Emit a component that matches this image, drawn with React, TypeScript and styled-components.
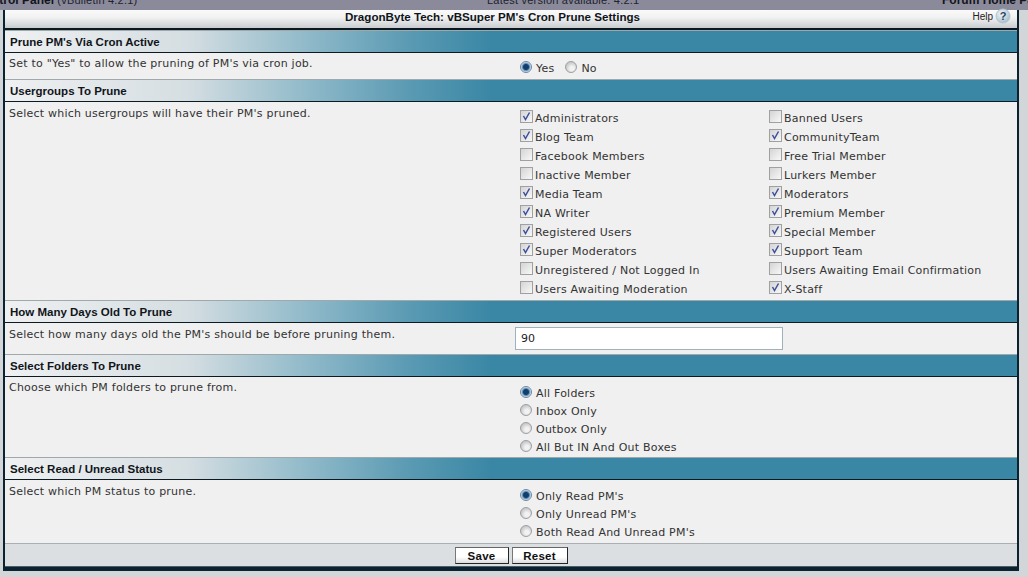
import React from 'react';
import styled, { createGlobalStyle } from 'styled-components';

const GlobalStyle = createGlobalStyle`
  html, body {
    margin: 0;
    padding: 0;
    height: 577px;
    overflow: hidden;
    background: #d3d6d8;
    font-family: "DejaVu Sans", Verdana, sans-serif;
  }
`;

const TopBar = styled.div`
  height: 10px;
  background: #8a8a9a;
  display: flex;
  align-items: flex-start;
  overflow: hidden;
  white-space: nowrap;
  color: #222230;
  font-family: "Liberation Sans", Arial, sans-serif;
  font-size: 11px;
  line-height: 14px;
`;

const TopItem = styled.div<{ $width: number; $indent?: number }>`
  width: ${(p) => p.$width}px;
  flex: none;
  height: 14px;
  margin-top: -7px;
  margin-left: ${(p) => p.$indent ?? 0}px;
  letter-spacing: 0.02em;
  b {
    font-size: 12px;
    letter-spacing: 0;
    color: #14141c;
  }
`;

const Panel = styled.div`
  margin: 0 9px 0 3px;
  border: solid #0b2230;
  border-width: 0 2px 3px 2px;
  background: #f0f0f0;
  box-shadow: 0 1px 0 #0b2230;
`;

const TitleBar = styled.div`
  height: 18px;
  box-sizing: content-box;
  position: relative;
  display: flex;
  justify-content: center;
  align-items: flex-start;
  padding-right: 37px;
  line-height: 13px;
  background: linear-gradient(#fafafa, #f2f2f3 40%, #c9ccd0);
  border-bottom: 2px solid #0b1820;
  font-family: "Liberation Sans", Arial, sans-serif;
  font-weight: bold;
  font-size: 11.6px;
  color: #10151a;
`;

const Help = styled.div`
  position: absolute;
  right: 6px;
  top: -2px;
  display: flex;
  align-items: center;
  gap: 2px;
  font-family: "Liberation Sans", Arial, sans-serif;
  font-weight: normal;
  font-size: 10px;
  color: #222;
`;

const SectionHeader = styled.div`
  height: 21px;
  display: flex;
  align-items: center;
  padding-left: 5px;
  background: linear-gradient(90deg, #eff0f1 0%, #d5dee2 18%, #8fb9c9 30%, #5a9ab3 40%, #3a87a5 48%, #3a87a5 100%);
  border-top: 1px solid #9fa8ab;
  border-bottom: 1px solid #0c1a22;
  font-family: "Liberation Sans", Arial, sans-serif;
  font-weight: bold;
  font-size: 11.5px;
  color: #10151a;
`;

const Row = styled.div<{ $height: number }>`
  height: ${(p) => p.$height}px;
  display: grid;
  grid-template-columns: 510px 1fr;
  font-size: 11px;
  line-height: 14px;
  color: #333;
`;

const Description = styled.div<{ $top?: number }>`
  padding: ${(p) => p.$top ?? 4}px 0 0 4px;
  letter-spacing: 0.02em;
`;

const Options = styled.div<{ $top: number }>`
  padding: ${(p) => p.$top}px 0 0 5px;
`;

const OptionLine = styled.div`
  display: flex;
  gap: 11px;
  height: 18px;
  align-items: center;
`;

const RadioStack = styled.div`
  display: flex;
  flex-direction: column;
`;

const GroupGrid = styled.div`
  display: grid;
  grid-template-columns: 249px 1fr;
  grid-auto-rows: 19px;
`;

const Choice = styled.label<{ $gap: number }>`
  display: flex;
  align-items: center;
  gap: ${(p) => p.$gap}px;
  letter-spacing: 0.02em;
  white-space: nowrap;
  color: #333;
`;

const RadioMark = styled.span<{ $on?: boolean }>`
  width: 12px;
  height: 12px;
  flex: none;
  box-sizing: border-box;
  margin-top: -5px;
  border-radius: 50%;
  border: 1px solid ${(p) => (p.$on ? '#6e87a0' : '#9c9fa3')};
  background: ${(p) =>
    p.$on
      ? 'radial-gradient(circle, #123e6e 0 2.5px, #5c8fb8 3.5px, #dfe8ef 5px)'
      : 'radial-gradient(circle at 60% 65%, #f2f2f2 0 2px, #c9cacc 6px)'};
`;

const CheckMark = styled.span`
  width: 13px;
  height: 13px;
  flex: none;
  box-sizing: border-box;
  margin-top: -5px;
  display: flex;
  border: 1px solid #a0a0a0;
  background: linear-gradient(135deg, #d4d4d4, #f8f8f8);
`;

const NumberInput = styled.input`
  width: 268px;
  height: 23px;
  box-sizing: border-box;
  margin: 4px 0 0 -5px;
  padding: 0 5px;
  border: 1px solid #9fb2ba;
  background: #fff;
  font-family: "DejaVu Sans", Verdana, sans-serif;
  font-size: 11px;
  color: #222;
`;

const Footer = styled.div`
  height: 24px;
  display: flex;
  justify-content: center;
  align-items: center;
  gap: 3px;
  padding-top: 1px;
  box-sizing: border-box;
  border-top: 1px solid #a9afb2;
  border-bottom: 1px solid #4a5d68;
  background: #dcdfe1;
`;

const Button = styled.button<{ $width: number }>`
  width: ${(p) => p.$width}px;
  height: 17px;
  padding: 0;
  border: 1px solid #20262a;
  border-top-color: #666;
  border-left-color: #777;
  border-radius: 0;
  background: linear-gradient(#fff 60%, #dcdcdc);
  font-family: "Liberation Sans", Arial, sans-serif;
  font-weight: bold;
  font-size: 11.5px;
  letter-spacing: 0.02em;
  color: #111;
`;

const Radio = ({ on, label }: { on?: boolean; label: string }) => (
  <Choice $gap={4}>
    <RadioMark $on={on} />
    {label}
  </Choice>
);

const Check = ({ on, label }: { on?: boolean; label: string }) => (
  <Choice $gap={2}>
    <CheckMark>
      {on && (
        <svg width="11" height="11" viewBox="0 0 11 11">
          <path d="M2.5 5 L4.5 8.5 L8.5 1.5" fill="none" stroke="#3b4f9a" strokeWidth="1.5" />
        </svg>
      )}
    </CheckMark>
    {label}
  </Choice>
);

const groups: [string, boolean][] = [
  ['Administrators', true],
  ['Banned Users', false],
  ['Blog Team', true],
  ['CommunityTeam', true],
  ['Facebook Members', false],
  ['Free Trial Member', false],
  ['Inactive Member', false],
  ['Lurkers Member', false],
  ['Media Team', true],
  ['Moderators', true],
  ['NA Writer', true],
  ['Premium Member', true],
  ['Registered Users', true],
  ['Special Member', true],
  ['Super Moderators', true],
  ['Support Team', true],
  ['Unregistered / Not Logged In', false],
  ['Users Awaiting Email Confirmation', false],
  ['Users Awaiting Moderation', false],
  ['X-Staff', true],
];

const HelpIcon = () => (
  <svg width="16" height="16" viewBox="0 0 16 16">
    <defs>
      <radialGradient id="help-bg" cx="0.4" cy="0.35" r="0.7">
        <stop offset="0" stopColor="#f4f8fa" />
        <stop offset="1" stopColor="#a3bccb" />
      </radialGradient>
    </defs>
    <circle cx="8" cy="8" r="7" fill="url(#help-bg)" stroke="#b5c3cc" />
    <text x="8" y="12" textAnchor="middle" fontSize="11" fontWeight="bold" fontFamily="Liberation Sans" fill="#27455f">
      ?
    </text>
  </svg>
);

export default function App() {
  return (
    <>
      <GlobalStyle />
      <TopBar>
        <TopItem $width={487 + 24} $indent={-24}>
          <b>Control Panel</b> (vBulletin 4.2.1)
        </TopItem>
        <TopItem $width={455}>Latest version available: 4.2.1</TopItem>
        <TopItem $width={110}>
          <b>Forum Home Page</b>
        </TopItem>
      </TopBar>
      <Panel>
        <TitleBar>
          DragonByte Tech: vBSuper PM's Cron Prune Settings
          <Help>
            Help <HelpIcon />
          </Help>
        </TitleBar>

        <SectionHeader>Prune PM's Via Cron Active</SectionHeader>
        <Row $height={26}>
          <Description>Set to "Yes" to allow the pruning of PM's via cron job.</Description>
          <Options $top={7}>
            <OptionLine>
              <Radio on label="Yes" />
              <Radio label="No" />
            </OptionLine>
          </Options>
        </Row>

        <SectionHeader>Usergroups To Prune</SectionHeader>
        <Row $height={198}>
          <Description $top={5}>Select which usergroups will have their PM's pruned.</Description>
          <Options $top={7}>
            <GroupGrid>
              {groups.map(([label, on]) => (
                <Check key={label} on={on} label={label} />
              ))}
            </GroupGrid>
          </Options>
        </Row>

        <SectionHeader>How Many Days Old To Prune</SectionHeader>
        <Row $height={31}>
          <Description $top={5}>Select how many days old the PM's should be before pruning them.</Description>
          <Options $top={0}>
            <NumberInput defaultValue="90" />
          </Options>
        </Row>

        <SectionHeader>Select Folders To Prune</SectionHeader>
        <Row $height={80}>
          <Description>Choose which PM folders to prune from.</Description>
          <Options $top={8}>
            <RadioStack>
              {['All Folders', 'Inbox Only', 'Outbox Only', 'All But IN And Out Boxes'].map((label, i) => (
                <OptionLine key={label}>
                  <Radio on={i === 0} label={label} />
                </OptionLine>
              ))}
            </RadioStack>
          </Options>
        </Row>

        <SectionHeader>Select Read / Unread Status</SectionHeader>
        <Row $height={63}>
          <Description $top={5}>Select which PM status to prune.</Description>
          <Options $top={8}>
            <RadioStack>
              {["Only Read PM's", "Only Unread PM's", "Both Read And Unread PM's"].map((label, i) => (
                <OptionLine key={label}>
                  <Radio on={i === 0} label={label} />
                </OptionLine>
              ))}
            </RadioStack>
          </Options>
        </Row>

        <Footer>
          <Button $width={54}>Save</Button>
          <Button $width={56}>Reset</Button>
        </Footer>
      </Panel>
    </>
  );
}
